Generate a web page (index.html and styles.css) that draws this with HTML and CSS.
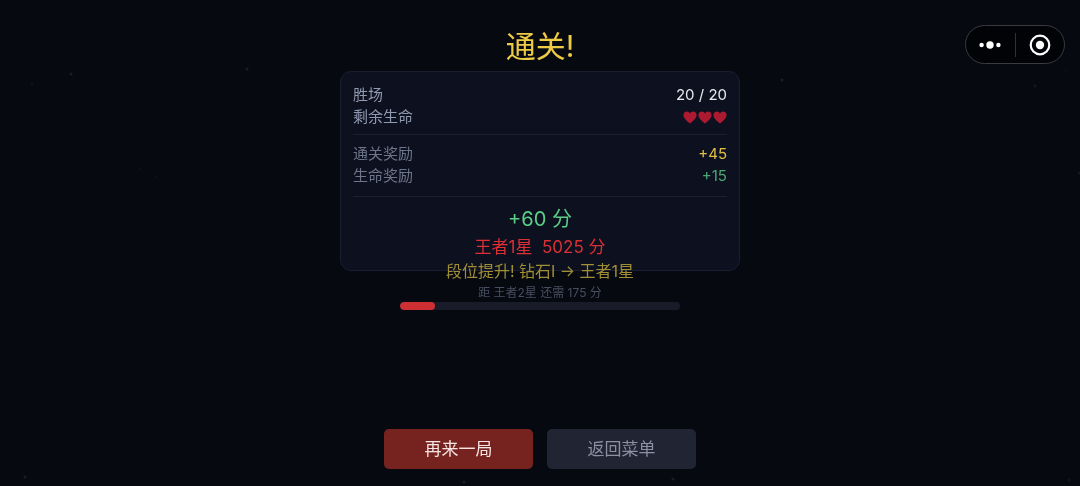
FILE: index.html
```html
<!DOCTYPE html>
<html lang="zh-CN">
<head>
    <meta charset="UTF-8">
    <meta name="viewport" content="width=device-width, initial-scale=1.0">
    <title>通关</title>
    <link rel="stylesheet" href="styles.css">
</head>
<body>
    <!-- Background stars -->
    <svg class="stars" viewBox="0 0 1080 486" preserveAspectRatio="xMidYMid slice" aria-hidden="true">
        <circle cx="32" cy="84" r="1.5" opacity="0.6"/>
        <circle cx="71" cy="74" r="1.5"/>
        <circle cx="247" cy="69" r="1.5"/>
        <circle cx="140" cy="169" r="1" opacity="0.4"/>
        <circle cx="156" cy="177" r="1" opacity="0.4"/>
        <circle cx="782" cy="80" r="1.5"/>
        <circle cx="1035" cy="86" r="1.5" opacity="0.8"/>
        <circle cx="1066" cy="71" r="1" opacity="0.4"/>
        <circle cx="1079" cy="173" r="1.5" opacity="0.8"/>
        <circle cx="25" cy="477" r="1.5"/>
        <circle cx="464" cy="482" r="1.5"/>
        <circle cx="673" cy="479" r="1.5"/>
        <circle cx="1069" cy="480" r="1.5" opacity="0.6"/>
    </svg>

    <!-- Mini program menu -->
    <div class="capsule">
        <button type="button" class="capsule-btn" aria-label="更多">
            <svg width="22" height="8" viewBox="0 0 22 8">
                <circle cx="2.6" cy="4" r="2.2"/>
                <circle cx="11" cy="4" r="3.7"/>
                <circle cx="19.4" cy="4" r="2.2"/>
            </svg>
        </button>
        <button type="button" class="capsule-btn" aria-label="关闭">
            <svg width="22" height="22" viewBox="0 0 22 22">
                <circle class="ring" cx="11" cy="11" r="9.3"/>
                <circle cx="11" cy="11" r="4.2"/>
            </svg>
        </button>
    </div>

    <main class="result">
        <h1>通关!</h1>

        <section class="card">
            <dl class="rows">
                <div class="row">
                    <dt>胜场</dt>
                    <dd>20 / 20</dd>
                </div>
                <div class="row">
                    <dt>剩余生命</dt>
                    <dd class="hearts" aria-label="3">
                        <svg viewBox="0 0 14 13"><path d="M7 12.6C5.6 11.2.4 8 .4 4.1.4 2 1.9.5 3.8.5 5.2.5 6.4 1.3 7 2.5 7.6 1.3 8.8.5 10.2.5c1.9 0 3.4 1.5 3.4 3.6C13.6 8 8.4 11.2 7 12.6z"/></svg>
                        <svg viewBox="0 0 14 13"><path d="M7 12.6C5.6 11.2.4 8 .4 4.1.4 2 1.9.5 3.8.5 5.2.5 6.4 1.3 7 2.5 7.6 1.3 8.8.5 10.2.5c1.9 0 3.4 1.5 3.4 3.6C13.6 8 8.4 11.2 7 12.6z"/></svg>
                        <svg viewBox="0 0 14 13"><path d="M7 12.6C5.6 11.2.4 8 .4 4.1.4 2 1.9.5 3.8.5 5.2.5 6.4 1.3 7 2.5 7.6 1.3 8.8.5 10.2.5c1.9 0 3.4 1.5 3.4 3.6C13.6 8 8.4 11.2 7 12.6z"/></svg>
                    </dd>
                </div>
            </dl>
            <dl class="rows bonus">
                <div class="row">
                    <dt>通关奖励</dt>
                    <dd class="gold">+45</dd>
                </div>
                <div class="row">
                    <dt>生命奖励</dt>
                    <dd class="green">+15</dd>
                </div>
            </dl>
            <div class="summary">
                <p class="total">+60 分</p>
                <p class="rank">王者1星&nbsp; 5025 分</p>
                <p class="promotion">段位提升! 钻石I → 王者1星</p>
                <p class="next">距 王者2星 还需 175 分</p>
                <div class="bar">
                    <div class="bar-fill" style="width: 12.5%"></div>
                </div>
            </div>
        </section>

        <div class="actions">
            <button type="button" class="btn btn-primary">再来一局</button>
            <button type="button" class="btn">返回菜单</button>
        </div>
    </main>
</body>
</html>
```
FILE: styles.css
```css
* {
    box-sizing: border-box;
    margin: 0;
    padding: 0;
}

body {
    font-family: Inter, "Noto Sans CJK SC", sans-serif;
    background-color: #060910;
    color: #e8eaf0;
}

button {
    font-family: inherit;
    border: none;
    cursor: pointer;
}

.stars {
    position: fixed;
    top: 0;
    left: 0;
    width: 100%;
    height: 100%;
    fill: #1a1d22;
}

.capsule {
    position: absolute;
    top: 25px;
    right: 15px;
    display: flex;
    align-items: center;
    width: 100px;
    height: 39px;
    border: 1px solid #3a3b3f;
    border-radius: 20px;
    background-color: #020306;
}

.capsule-btn {
    flex: 1;
    display: flex;
    align-items: center;
    justify-content: center;
    height: 24px;
    background: none;
    fill: #ffffff;
}

.capsule-btn + .capsule-btn {
    border-left: 1px solid #303136;
}

.ring {
    fill: none;
    stroke: #ffffff;
    stroke-width: 2.2;
}

.result {
    position: relative;
    display: flex;
    flex-direction: column;
    align-items: center;
    min-height: 100vh;
    padding: 23px 16px 17px;
}

h1 {
    margin-bottom: 2px;
    font-size: 30px;
    line-height: 46px;
    font-weight: 400;
    color: #edcb45;
}

/* The rank lines run past the bottom edge of the card */
.card {
    width: 100%;
    max-width: 400px;
    height: 200px;
    padding: 12px;
    border: 1px solid #1b1e30;
    border-radius: 11px;
    background-color: #0d101e;
}

.rows {
    padding-bottom: 6px;
    border-bottom: 1px solid #1c1f2c;
}

.bonus {
    padding-top: 8px;
    padding-bottom: 9px;
}

.row {
    display: flex;
    justify-content: space-between;
    font-size: 15px;
    line-height: 22px;
}

dt {
    color: #8f99b0;
}

.bonus dt {
    color: #6c758a;
}

.gold {
    color: #e0c044;
}

.green {
    color: #4ca873;
}

.hearts {
    display: flex;
    align-items: center;
    gap: 1px;
}

.hearts svg {
    width: 14px;
    height: 13px;
    fill: #ab1a30;
}

.summary {
    display: flex;
    flex-direction: column;
    align-items: center;
    padding-top: 8px;
}

.total {
    font-size: 20px;
    line-height: 28px;
    color: #5ace87;
}

.rank {
    font-size: 17px;
    line-height: 28px;
    color: #dc2f36;
}

.promotion {
    margin-bottom: 3px;
    font-size: 16px;
    line-height: 20px;
    color: #a08f35;
}

.next {
    font-size: 12px;
    line-height: 18px;
    color: #484e60;
}

.bar {
    width: 280px;
    max-width: 100%;
    height: 8px;
    border-radius: 4px;
    background-color: #191c28;
    overflow: hidden;
}

.bar-fill {
    height: 100%;
    border-radius: 4px;
    background-color: #ce2f33;
}

.actions {
    display: flex;
    gap: 14px;
    margin-top: auto;
}

.btn {
    width: 149px;
    height: 40px;
    padding-bottom: 3px;
    border-radius: 5px;
    font-size: 17px;
    color: #8c90a0;
    background-color: #212432;
}

.btn-primary {
    color: #f5e4e3;
    background-color: #76231f;
}
```
